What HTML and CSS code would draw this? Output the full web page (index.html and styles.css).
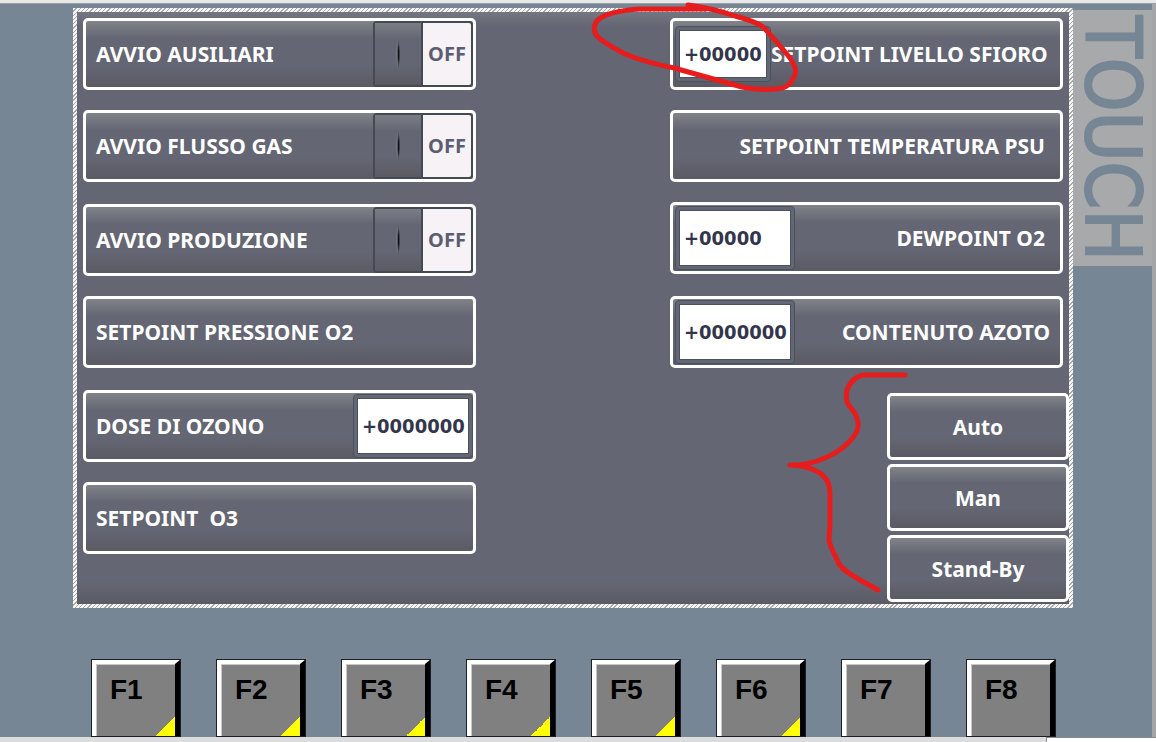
FILE: index.html
```html
<!DOCTYPE html>
<html lang="it">
<head>
<meta charset="utf-8">
<meta name="viewport" content="width=device-width, initial-scale=1">
<title>Touch</title>
<link rel="stylesheet" href="styles.css">
</head>
<body>
<div class="topbar"></div>
<div class="device">
  <div class="stage">
    <main class="panel">
      <div class="column">
        <div class="group">
          <div class="row">
            <span class="caption" id="aux">AVVIO AUSILIARI</span>
            <button class="switch" type="button" role="switch" aria-checked="false" aria-labelledby="aux"><span class="knob"></span><span class="state">OFF</span></button>
          </div>
          <div class="row">
            <span class="caption" id="gas">AVVIO FLUSSO GAS</span>
            <button class="switch" type="button" role="switch" aria-checked="false" aria-labelledby="gas"><span class="knob"></span><span class="state">OFF</span></button>
          </div>
        </div>
        <div class="group">
          <div class="row">
            <span class="caption" id="prod">AVVIO PRODUZIONE</span>
            <button class="switch" type="button" role="switch" aria-checked="false" aria-labelledby="prod"><span class="knob"></span><span class="state">OFF</span></button>
          </div>
          <div class="row"><span class="caption">SETPOINT PRESSIONE O2</span></div>
        </div>
        <div class="group">
          <div class="row">
            <label class="caption" for="dose">DOSE DI OZONO</label>
            <span class="frame"><input class="value" id="dose" type="text" value="+0000000"></span>
          </div>
          <div class="row"><span class="caption">SETPOINT  O3</span></div>
        </div>
      </div>
      <div class="column">
        <div class="group">
          <div class="row right">
            <span class="frame small"><input class="value" id="level" type="text" value="+00000"></span>
            <label class="caption" for="level">SETPOINT LIVELLO SFIORO</label>
          </div>
          <div class="row right"><span class="caption">SETPOINT TEMPERATURA PSU</span></div>
          <div class="row right">
            <span class="frame"><input class="value" id="dew" type="text" value="+00000"></span>
            <label class="caption" for="dew">DEWPOINT O2</label>
          </div>
        </div>
        <div class="row right wide">
          <span class="frame"><input class="value" id="n2" type="text" value="+0000000"></span>
          <label class="caption" for="n2">CONTENUTO AZOTO</label>
        </div>
        <div class="modes">
          <button class="mode" type="button">Auto</button>
          <button class="mode" type="button">Man</button>
          <button class="mode" type="button">Stand-By</button>
        </div>
      </div>
      <svg class="marks" viewBox="77 12 992 592" aria-hidden="true">
        <path d="M688 5C705 7 720 11 735 16C750 20 758 23 763 27C772 36 781 47 790 58C795 66 798 71 793 79C789 86 784 89 774 89C764 90 752 89 742 87L674 68C654 64 642 61 625 54C610 46 603 42 598 37C592 31 594 23 599 19C607 13 625 10 640 9H706"/>
        <path d="M905 375H865C857 375 850 382 847 390C846 396 846 401 848 404C851 409 855 411 857 418C859 425 858 430 856 433C848 446 835 455 817 461C808 464 801 465 790 465C804 465 812 468 820 473C828 479 830 485 830 495V523C830 530 829 535 829 540C830 547 835 555 839 564C844 571 850 574 860 580L878 590"/>
      </svg>
    </main>
    <aside class="brand"><span class="brand-name">TOUCH</span></aside>
  </div>
  <nav class="keys">
    <button class="key led" type="button">F1</button>
    <button class="key led" type="button">F2</button>
    <button class="key led" type="button">F3</button>
    <button class="key led" type="button">F4</button>
    <button class="key led" type="button">F5</button>
    <button class="key led" type="button">F6</button>
    <button class="key" type="button">F7</button>
    <button class="key" type="button">F8</button>
  </nav>
</div>
<footer class="bottombar"><div class="corner"></div></footer>
</body>
</html>
```
FILE: styles.css
```css
* { box-sizing: border-box; }

body {
  margin: 0;
  min-height: 100vh;
  display: flex;
  flex-direction: column;
  background: #768695;
  font-family: "Noto Sans", "Open Sans", sans-serif;
  font-size: 21px;
  font-weight: 700;
  color: #fff;
}

button, input { font: inherit; margin: 0; }

.topbar {
  height: 4px;
  background: #e8e8e8;
  border-bottom: 1px solid #98a2ac;
}

.device {
  flex: 1;
  display: flex;
  flex-direction: column;
  border-right: 4px solid #a4a5a7;
}

.stage {
  display: flex;
  align-items: flex-start;
  padding: 4px 0 0 73px;
}

.panel {
  position: relative;
  flex: 1;
  display: grid;
  grid-template-columns: minmax(0, 1fr) minmax(0, 1fr);
  column-gap: 194px;
  min-height: 600px;
  padding: 6px 6px 2px;
  border: 4px solid transparent;
  background:
    linear-gradient(#747681, #646673 14px, #646673 570px, #5b5a64) padding-box,
    repeating-linear-gradient(135deg, #f4f4f2 0 2px, #a9aaac 2px 3px) border-box;
}

.column { display: flex; flex-direction: column; gap: 22px; }
.group { display: flex; flex-direction: column; gap: 20px; }

.row, .mode {
  border: 3px solid #fff;
  border-radius: 5px;
  background: linear-gradient(#808388, #646673 26%, #646673 68%, #5b5a64);
}

.row {
  display: flex;
  align-items: center;
  justify-content: space-between;
  height: 72px;
  padding-left: 10px;
}

.right { padding: 0 15px 0 2px; }
.wide { padding-right: 10px; }

.caption {
  line-height: 28px;
  white-space: pre;
}
.right .caption { margin-left: auto; }

.switch {
  display: flex;
  width: 100px;
  height: 66px;
  padding: 0;
  border: 2px solid #434a54;
  border-radius: 4px;
  background: #f6f2f6;
}

.knob {
  display: flex;
  align-items: center;
  justify-content: center;
  width: 48px;
  height: 100%;
  border-right: 2px solid #434a54;
  background: linear-gradient(#7b7e85, #646673 26%, #646673 68%, #5b5a64);
}
.knob::before {
  content: "";
  width: 4px;
  height: 28px;
  background:
    radial-gradient(closest-side, #101114 30%, transparent) right / 3px 28px no-repeat,
    radial-gradient(closest-side, #9596a0, transparent) left / 3px 28px no-repeat;
}

.state {
  flex: 1;
  font-size: 20px;
  line-height: 62px;
  text-align: center;
  color: #5c5d72;
}

.frame {
  display: flex;
  width: 120px;
  height: 64px;
  padding: 3px;
  border: 1px solid #4b505c;
  border-radius: 4px;
  background: #626775;
}
.small { width: 96px; height: 56px; }

.value {
  flex: 1;
  min-width: 0;
  padding: 0 0 0 4px;
  border: 1px solid #4b505c;
  background: #fff;
  color: #33364b;
  font-family: "DejaVu Sans Condensed", "DejaVu Sans", sans-serif;
  font-size: 20px;
}

.modes {
  align-self: flex-end;
  display: flex;
  flex-direction: column;
  gap: 4px;
  width: 182px;
  margin: 3px -6px 0 0;
}

.mode {
  height: 67px;
  padding: 0;
  color: #fff;
}

.marks {
  position: absolute;
  inset: 0;
  width: 100%;
  height: 100%;
  overflow: visible;
  pointer-events: none;
  fill: none;
  stroke: #e71c1c;
  stroke-width: 5px;
  stroke-linecap: round;
  stroke-linejoin: round;
}

.brand {
  display: flex;
  align-items: center;
  justify-content: center;
  width: 79px;
  height: 256px;
  margin-top: 2px;
  background: #a7a9ab;
}

.brand-name {
  writing-mode: vertical-rl;
  font-family: "DejaVu Sans Condensed", "DejaVu Sans", sans-serif;
  font-size: 76px;
  font-weight: 400;
  line-height: 79px;
  color: #768695;
  -webkit-text-stroke: 2px #768695;
}

.keys {
  flex: 1;
  display: flex;
  gap: 35px;
  margin-top: 51px;
  padding-left: 91px;
}

.key {
  display: flex;
  align-items: flex-start;
  width: 90px;
  min-height: 78px;
  padding: 12px 0 0 14px;
  border: 5px solid #fff;
  border-right: 6px solid #000;
  border-bottom: 0;
  outline: 1px solid #1c2024;
  outline-offset: -1px;
  background: #808080;
  color: #000;
  font-family: "Liberation Sans", Arial, sans-serif;
  font-size: 28px;
  line-height: 28px;
  box-shadow: inset 1px 1px #c8c8c8;
}

.led {
  background: linear-gradient(135deg, transparent 50%, #ff0 50%) right bottom / 20px 20px no-repeat #808080;
}

.bottombar {
  display: flex;
  justify-content: flex-end;
  height: 5px;
  background: #dcdcdc;
}

.corner {
  width: 110px;
  border: 1px solid #8a8a8a;
  border-width: 1px 0 0 1px;
  background: #fff;
}
```
